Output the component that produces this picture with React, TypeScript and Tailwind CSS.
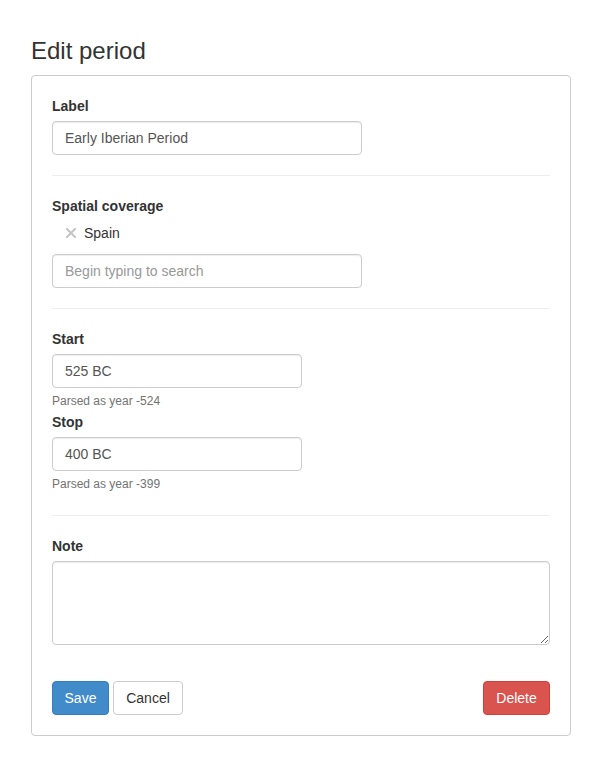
import React from 'react'

const inputCls =
  'block h-[34px] rounded-[4px] border border-[#ccc] bg-white px-[12px] py-[6px] text-[14px] leading-[20px] text-[#555] shadow-[inset_0_1px_1px_rgba(0,0,0,0.075)] outline-none placeholder:text-[#999]'

function Label({ children }: { children: React.ReactNode }) {
  return <label className="mb-[5px] block text-[14px] font-bold leading-[20px] text-[#333]">{children}</label>
}

function Divider() {
  return <hr className="my-[20px] border-0 border-t border-[#eee]" />
}

function RemoveIcon() {
  return (
    <svg width="10" height="10" viewBox="0 0 10 10" className="mr-[8px]">
      <path d="M1 1 L9 9 M9 1 L1 9" stroke="#c4c4c4" strokeWidth="2" strokeLinecap="square" />
    </svg>
  )
}

export default function App() {
  return (
    <div className="min-h-screen bg-white pl-[31px] pt-[38px] text-[14px] text-[#333]" style={{ fontFamily: '"Liberation Sans", Arial, sans-serif' }}>
      <h3 className="mb-[11px] text-[24px] font-medium leading-[26px] text-[#333]">Edit period</h3>
      <div className="w-[540px] rounded-[4px] border border-[#ccc] p-[20px]">
        <Label>Label</Label>
        <input className={`${inputCls} w-[310px]`} defaultValue="Early Iberian Period" />

        <Divider />

        <Label>Spatial coverage</Label>
        <ul className="mb-[11px] pl-[14px] pt-[2px]">
          <li className="flex items-center leading-[20px]">
            <RemoveIcon />
            <span>Spain</span>
          </li>
        </ul>
        <input className={`${inputCls} w-[310px]`} placeholder="Begin typing to search" />

        <Divider />

        <Label>Start</Label>
        <input className={`${inputCls} w-[250px]`} defaultValue="525 BC" />
        <p className="mb-[2px] mt-[5px] text-[12px] leading-[17px] text-[#737373]">Parsed as year -524</p>
        <Label>Stop</Label>
        <input className={`${inputCls} w-[250px]`} defaultValue="400 BC" />
        <p className="mt-[5px] text-[12px] leading-[17px] text-[#737373]">Parsed as year -399</p>

        <hr className="mb-[20px] mt-[22px] border-0 border-t border-[#eee]" />

        <Label>Note</Label>
        <textarea className={`${inputCls} h-[84px] w-full`} />

        <div className="mt-[36px] flex items-center">
          <button className="h-[34px] w-[57px] rounded-[4px] border border-[#357ebd] bg-[#428bca] text-[14px] leading-[20px] text-white">
            Save
          </button>
          <button className="ml-[4px] h-[34px] w-[70px] rounded-[4px] border border-[#ccc] bg-white text-[14px] leading-[20px] text-[#333]">
            Cancel
          </button>
          <button className="ml-auto h-[34px] w-[67px] rounded-[4px] border border-[#d43f3a] bg-[#d9534f] text-[14px] leading-[20px] text-white">
            Delete
          </button>
        </div>
      </div>
    </div>
  )
}
